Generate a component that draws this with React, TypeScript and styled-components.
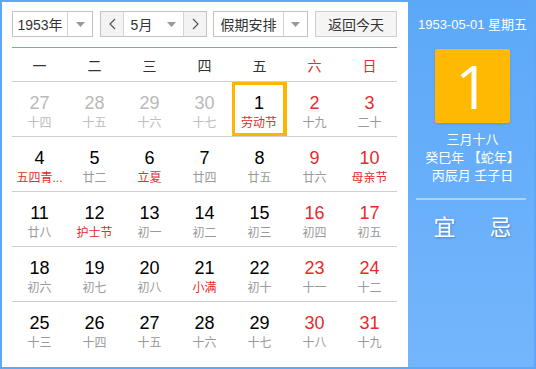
import styled, { createGlobalStyle } from 'styled-components';

const GlobalStyle = createGlobalStyle`
  html, body {
    margin: 0;
    padding: 0;
    background: #fff;
  }
  body {
    font-family: "Liberation Sans", "Noto Sans CJK SC", sans-serif;
  }
`;

const Frame = styled.div`
  width: 536px;
  height: 369px;
  box-sizing: border-box;
  border: 2px solid #5ea8f7;
  display: flex;
`;

const Main = styled.div`
  width: 406px;
  box-sizing: border-box;
  padding: 9px 11px 0 10px;
  background: #fff;
`;

const Toolbar = styled.div`
  display: flex;
  align-items: center;
  height: 26px;
  margin-bottom: 10px;
`;

const Control = styled.div<{ $gap?: number }>`
  display: flex;
  height: 26px;
  box-sizing: border-box;
  border: 1px solid #c3c3c3;
  margin-right: ${(p) => p.$gap ?? 0}px;
  font-size: 14px;
  color: #333;
  background: #fff;
`;

const SelectText = styled.div<{ $w: number }>`
  width: ${(p) => p.$w}px;
  display: flex;
  align-items: center;
  justify-content: center;
`;

const ArrowPart = styled.div<{ $w: number; $plain?: boolean }>`
  width: ${(p) => p.$w}px;
  display: flex;
  align-items: center;
  justify-content: center;
  border-left: ${(p) => (p.$plain ? 'none' : '1px solid #d4d4d4')};
  background: #fff;
`;

const NavPart = styled.div<{ $side: 'left' | 'right' }>`
  width: 22px;
  display: flex;
  align-items: center;
  justify-content: center;
  background: #f3f3f3;
  ${(p) => (p.$side === 'left' ? 'border-right' : 'border-left')}: 1px solid #d4d4d4;
`;

const TodayButton = styled.button`
  margin-left: auto;
  width: 82px;
  height: 26px;
  border: 1px solid #cfcfcf;
  background: #f5f5f5;
  font-family: inherit;
  font-size: 14px;
  color: #333;
  padding: 0;
`;

const Table = styled.div`
  border-top: 1px solid #5ea8f7;
`;

const WeekRow = styled.div`
  display: grid;
  grid-template-columns: repeat(7, 55px);
  height: 33px;
  border-bottom: 1px solid #cfcfcf;
`;

const WeekCell = styled.div<{ $red?: boolean }>`
  display: flex;
  align-items: center;
  justify-content: center;
  font-size: 14px;
  color: ${(p) => (p.$red ? '#e52b2b' : '#333')};
`;

const DayRow = styled.div<{ $last?: boolean }>`
  display: grid;
  grid-template-columns: repeat(7, 55px);
  height: 54px;
  border-bottom: ${(p) => (p.$last ? 'none' : '1px solid #cfcfcf')};
`;

const DayCell = styled.div<{ $selected?: boolean }>`
  display: flex;
  flex-direction: column;
  align-items: center;
  box-sizing: border-box;
  padding-top: 8px;
  border: 3px solid ${(p) => (p.$selected ? '#ffb400' : 'transparent')};
  border-right-width: ${(p) => (p.$selected ? '4px' : '3px')};
`;

const DayNum = styled.div<{ $tone: 'normal' | 'red' | 'muted' }>`
  font-size: 18px;
  line-height: 20px;
  color: ${(p) => (p.$tone === 'red' ? '#e52b2b' : p.$tone === 'muted' ? '#b9b9b9' : '#000')};
`;

const Lunar = styled.div<{ $tone: 'normal' | 'red' | 'muted' }>`
  margin-top: 3px;
  font-size: 12px;
  line-height: 14px;
  white-space: nowrap;
  color: ${(p) => (p.$tone === 'red' ? '#e52b2b' : p.$tone === 'muted' ? '#bdbdbd' : '#999')};
`;

const Side = styled.div`
  flex: 1;
  box-sizing: border-box;
  padding-left: 3px;
  background: linear-gradient(#5ca8f8, #74b6fc);
  color: #fff;
  display: flex;
  flex-direction: column;
  align-items: center;
`;

const SideDate = styled.div`
  margin-top: 15px;
  font-size: 13px;
  line-height: 16px;
  white-space: nowrap;
`;

const BigDay = styled.div`
  margin-top: 16px;
  width: 75px;
  height: 74px;
  background: #ffb900;
  border-radius: 2px;
  box-shadow: 0 1px 3px rgba(0, 0, 0, 0.12);
  display: flex;
  align-items: center;
  justify-content: center;
  font-size: 60px;
  font-weight: 400;
  font-family: "Open Sans", "Liberation Sans", sans-serif;
`;

const SideLine = styled.div<{ $first?: boolean }>`
  margin-top: ${(p) => (p.$first ? '8px' : '0')};
  font-size: 13px;
  line-height: 18px;
  white-space: nowrap;
`;

const Divider = styled.div`
  width: 110px;
  height: 2px;
  margin-top: 13px;
  margin-right: 3px;
  background: rgba(255, 255, 255, 0.45);
`;

const YiJi = styled.div`
  display: flex;
  gap: 34px;
  margin-top: 15px;
  font-size: 22px;
  line-height: 26px;
  text-shadow: 1px 1px 2px rgba(0, 0, 0, 0.25);
`;

const Triangle = () => (
  <svg width="9" height="5" viewBox="0 0 9 5">
    <path d="M0 0 L9 0 L4.5 5 Z" fill="#999" />
  </svg>
);

const Chevron = ({ dir }: { dir: 'left' | 'right' }) => (
  <svg width="7" height="12" viewBox="0 0 7 12">
    <path
      d={dir === 'left' ? 'M6 1 L1 6 L6 11' : 'M1 1 L6 6 L1 11'}
      fill="none"
      stroke="#555"
      strokeWidth="1.2"
    />
  </svg>
);

type Tone = 'normal' | 'red' | 'muted';
type Day = { d: number; l: string; dt: Tone; lt: Tone; sel?: boolean };

const n = (d: number, l: string, dt: Tone = 'normal', lt: Tone = 'normal'): Day => ({ d, l, dt, lt });

const weeks: Day[][] = [
  [
    n(27, '十四', 'muted', 'muted'),
    n(28, '十五', 'muted', 'muted'),
    n(29, '十六', 'muted', 'muted'),
    n(30, '十七', 'muted', 'muted'),
    { d: 1, l: '劳动节', dt: 'normal', lt: 'red', sel: true },
    n(2, '十九', 'red'),
    n(3, '二十', 'red'),
  ],
  [
    n(4, '五四青...', 'normal', 'red'),
    n(5, '廿二'),
    n(6, '立夏', 'normal', 'red'),
    n(7, '廿四'),
    n(8, '廿五'),
    n(9, '廿六', 'red'),
    n(10, '母亲节', 'red', 'red'),
  ],
  [
    n(11, '廿八'),
    n(12, '护士节', 'normal', 'red'),
    n(13, '初一'),
    n(14, '初二'),
    n(15, '初三'),
    n(16, '初四', 'red'),
    n(17, '初五', 'red'),
  ],
  [
    n(18, '初六'),
    n(19, '初七'),
    n(20, '初八'),
    n(21, '小满', 'normal', 'red'),
    n(22, '初十'),
    n(23, '十一', 'red'),
    n(24, '十二', 'red'),
  ],
  [
    n(25, '十三'),
    n(26, '十四'),
    n(27, '十五'),
    n(28, '十六'),
    n(29, '十七'),
    n(30, '十八', 'red'),
    n(31, '十九', 'red'),
  ],
];

const weekdays = ['一', '二', '三', '四', '五', '六', '日'];

export default function App() {
  return (
    <>
      <GlobalStyle />
      <Frame>
        <Main>
          <Toolbar>
            <Control $gap={7}>
              <SelectText $w={54}>1953年</SelectText>
              <ArrowPart $w={24}>
                <Triangle />
              </ArrowPart>
            </Control>
            <Control $gap={6}>
              <NavPart $side="left">
                <Chevron dir="left" />
              </NavPart>
              <SelectText $w={35}>5月</SelectText>
              <ArrowPart $w={24} $plain>
                <Triangle />
              </ArrowPart>
              <NavPart $side="right">
                <Chevron dir="right" />
              </NavPart>
            </Control>
            <Control>
              <SelectText $w={69}>假期安排</SelectText>
              <ArrowPart $w={23}>
                <Triangle />
              </ArrowPart>
            </Control>
            <TodayButton>返回今天</TodayButton>
          </Toolbar>
          <Table>
            <WeekRow>
              {weekdays.map((w, i) => (
                <WeekCell key={w} $red={i >= 5}>
                  {w}
                </WeekCell>
              ))}
            </WeekRow>
            {weeks.map((week, wi) => (
              <DayRow key={wi} $last={wi === weeks.length - 1}>
                {week.map((day) => (
                  <DayCell key={`${wi}-${day.d}`} $selected={day.sel}>
                    <DayNum $tone={day.dt}>{day.d}</DayNum>
                    <Lunar $tone={day.lt}>{day.l}</Lunar>
                  </DayCell>
                ))}
              </DayRow>
            ))}
          </Table>
        </Main>
        <Side>
          <SideDate>1953-05-01 星期五</SideDate>
          <BigDay>1</BigDay>
          <SideLine $first>三月十八</SideLine>
          <SideLine>癸巳年 【蛇年】</SideLine>
          <SideLine>丙辰月 壬子日</SideLine>
          <Divider />
          <YiJi>
            <span>宜</span>
            <span>忌</span>
          </YiJi>
        </Side>
      </Frame>
    </>
  );
}
